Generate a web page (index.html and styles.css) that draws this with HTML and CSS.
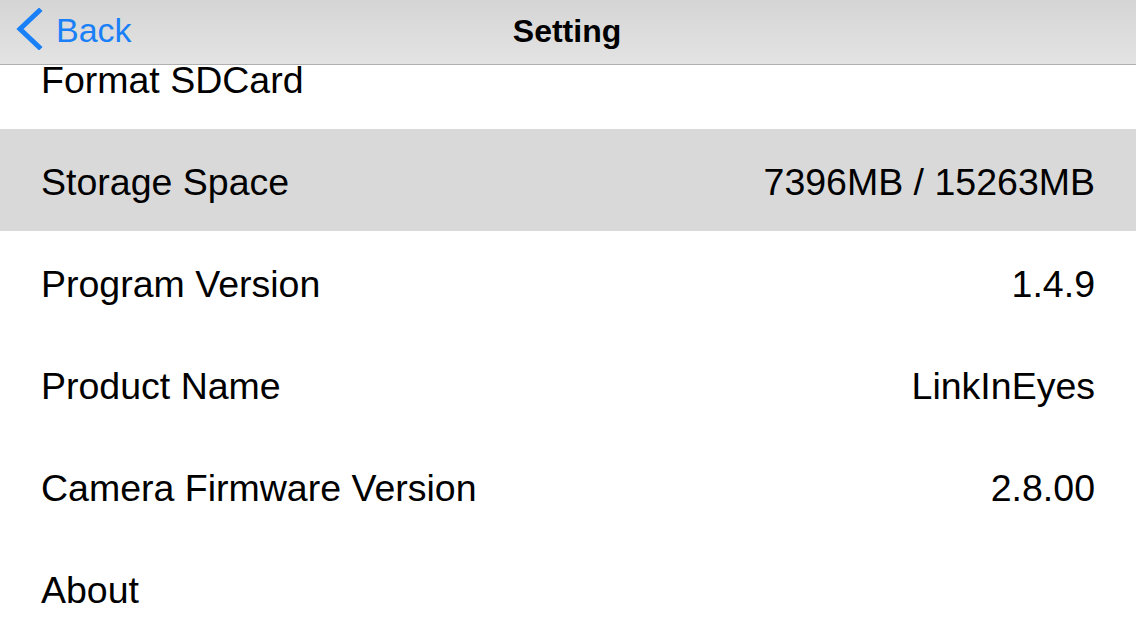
FILE: index.html
```html
<!DOCTYPE html>
<html>
<head>
<meta charset="utf-8">
<link rel="stylesheet" href="styles.css">
</head>
<body>
<div class="screen">
  <header class="navbar">
    <a class="back">
      <svg class="chevron" width="30" height="42" viewBox="0 0 30 42">
        <polyline points="25,3 6,21 25,39" fill="none" stroke="#1a80f8" stroke-width="5" stroke-linecap="square" stroke-linejoin="miter"/>
      </svg>
      <span class="back-label">Back</span>
    </a>
    <h1 class="title">Setting</h1>
  </header>
  <div class="content">
    <ul class="list">
      <li class="row"><span class="label">Format SDCard</span></li>
      <li class="row row-selected"><span class="label">Storage Space</span><span class="value">7396MB / 15263MB</span></li>
      <li class="row"><span class="label">Program Version</span><span class="value">1.4.9</span></li>
      <li class="row"><span class="label">Product Name</span><span class="value">LinkInEyes</span></li>
      <li class="row"><span class="label">Camera Firmware Version</span><span class="value">2.8.00</span></li>
      <li class="row"><span class="label">About</span></li>
    </ul>
  </div>
</div>
</body>
</html>
```
FILE: styles.css
```css
html, body {
  margin: 0;
  padding: 0;
  background: #ffffff;
}
body {
  font-family: "Liberation Sans", Arial, sans-serif;
  color: #000;
}
.screen {
  width: 1136px;
  height: 640px;
  display: flex;
  flex-direction: column;
  overflow: hidden;
}
.navbar {
  flex: 0 0 64px;
  position: relative;
  display: flex;
  align-items: center;
  justify-content: center;
  background: linear-gradient(#d5d5d5, #e3e3e3);
  border-bottom: 1px solid #b0b0b0;
}
.back {
  position: absolute;
  left: 14px;
  top: 0;
  height: 64px;
  display: flex;
  align-items: center;
  gap: 12px;
  color: #1a80f8;
}
.chevron {
  display: block;
  margin-top: -6px;
}
.back-label {
  font-size: 34px;
  line-height: 1;
  margin-top: -4px;
}
.title {
  margin: 0;
  font-size: 32px;
  font-weight: bold;
  line-height: 1;
  margin-top: -3px;
  margin-left: -2px;
}
.content {
  flex: 1;
  overflow: hidden;
}
.list {
  list-style: none;
  margin: -38px 0 0 0;
  padding: 0;
}
.row {
  height: 102px;
  display: flex;
  align-items: center;
  justify-content: space-between;
  padding: 6px 41px 0 41px;
  box-sizing: border-box;
  font-size: 37.5px;
  background: #ffffff;
}
.row-selected {
  background: #d9d9d9;
}
.label, .value {
  line-height: 1;
}
```
